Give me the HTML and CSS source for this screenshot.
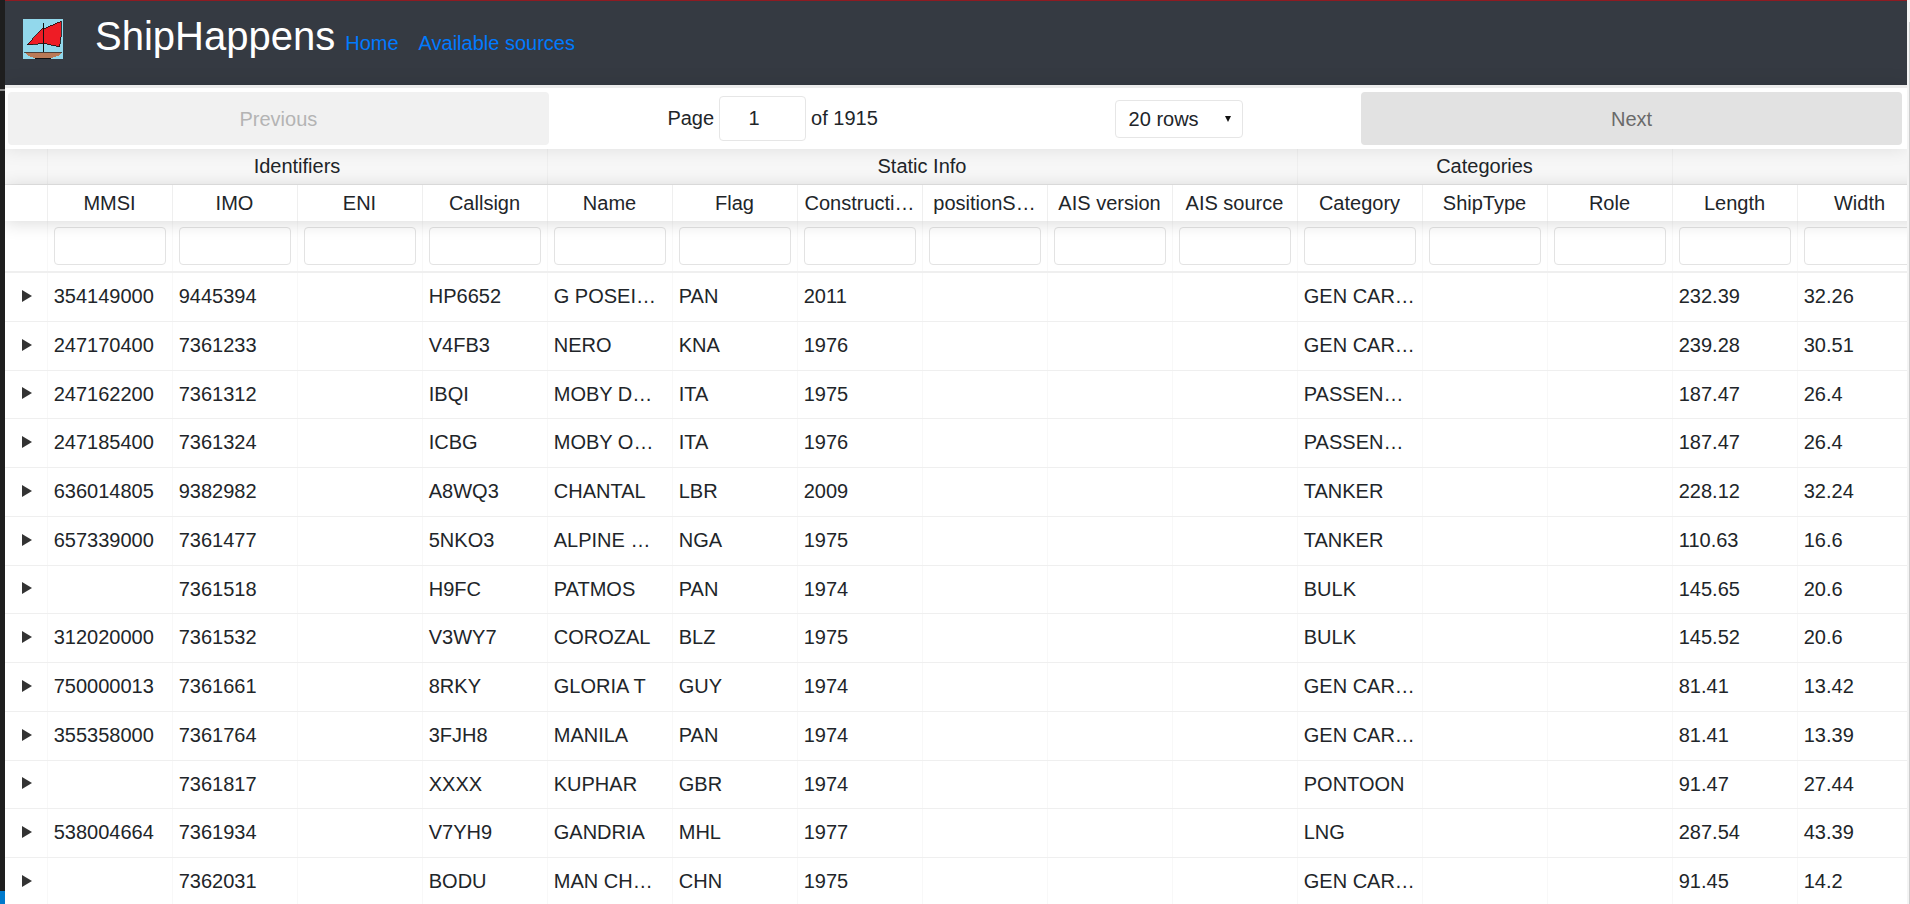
FILE: index.html
```html
<!DOCTYPE html>
<html lang="en">
<head>
    <meta charset="UTF-8">
    <meta name="viewport" content="width=device-width, initial-scale=1.0">
    <title>ShipHappens</title>
    <link rel="stylesheet" href="styles.css">
</head>
<body>
    <div class="strip-left">
        <div class="strip-tick"></div>
        <div class="strip-status"></div>
    </div>
    <div class="app">
        <nav class="navbar">
            <svg class="logo" viewBox="0 0 40 40" width="40" height="40">
                <rect width="40" height="40" fill="#92d8ec"/>
                <path d="M20.5 8 L4 26 L20.5 24.5 Z" fill="#ee1c25" stroke="#111" stroke-width="0.8"/>
                <path d="M20.5 9.5 L38 2 L38.5 14 L36.5 28 L20.5 24.5 Z" fill="#ee1c25" stroke="#111" stroke-width="0.8"/>
                <path d="M1 33 H39 L35 37 L28 39 H12 L5 37 Z" fill="#b97a57"/>
                <path d="M1 33 H39" stroke="#333" stroke-width="0.8"/>
                <path d="M12 39.5 H28" stroke="#111" stroke-width="1"/>
                <path d="M20.7 4 V33" stroke="#111" stroke-width="1"/>
            </svg>
            <span class="brand">ShipHappens</span>
            <a class="nav-link" href="#">Home</a>
            <a class="nav-link" href="#">Available sources</a>
        </nav>

        <div class="pagination">
            <button class="page-btn page-btn-disabled" type="button">Previous</button>
            <div class="page-center">
                <span class="page-info">Page <input class="page-input" type="text" value="1"> of 1915</span>
                <span class="select-wrap">
                    <select class="page-size">
                        <option>20 rows</option>
                        <option>50 rows</option>
                    </select>
                </span>
            </div>
            <button class="page-btn" type="button">Next</button>
        </div>

        <div class="table">
            <div class="row group-row">
                <div class="hcell expander"></div>
                <div class="hcell span-4">Identifiers</div>
                <div class="hcell span-6">Static Info</div>
                <div class="hcell span-3">Categories</div>
                <div class="hcell span-2"></div>
            </div>
            <div class="row header-row">
                <div class="hcell expander"></div>
                <div class="hcell">MMSI</div>
                <div class="hcell">IMO</div>
                <div class="hcell">ENI</div>
                <div class="hcell">Callsign</div>
                <div class="hcell">Name</div>
                <div class="hcell">Flag</div>
                <div class="hcell">Constructi…</div>
                <div class="hcell">positionS…</div>
                <div class="hcell">AIS version</div>
                <div class="hcell">AIS source</div>
                <div class="hcell">Category</div>
                <div class="hcell">ShipType</div>
                <div class="hcell">Role</div>
                <div class="hcell">Length</div>
                <div class="hcell">Width</div>
            </div>
            <div class="row filter-row">
                <div class="fcell expander"></div>
                <div class="fcell"><input type="text"></div>
                <div class="fcell"><input type="text"></div>
                <div class="fcell"><input type="text"></div>
                <div class="fcell"><input type="text"></div>
                <div class="fcell"><input type="text"></div>
                <div class="fcell"><input type="text"></div>
                <div class="fcell"><input type="text"></div>
                <div class="fcell"><input type="text"></div>
                <div class="fcell"><input type="text"></div>
                <div class="fcell"><input type="text"></div>
                <div class="fcell"><input type="text"></div>
                <div class="fcell"><input type="text"></div>
                <div class="fcell"><input type="text"></div>
                <div class="fcell"><input type="text"></div>
                <div class="fcell"><input type="text"></div>
            </div>

            <div class="row body-row"><div class="cell expander"><i class="arrow"></i></div><div class="cell">354149000</div><div class="cell">9445394</div><div class="cell"></div><div class="cell">HP6652</div><div class="cell">G POSEI…</div><div class="cell">PAN</div><div class="cell">2011</div><div class="cell"></div><div class="cell"></div><div class="cell"></div><div class="cell">GEN CAR…</div><div class="cell"></div><div class="cell"></div><div class="cell">232.39</div><div class="cell">32.26</div></div>
            <div class="row body-row"><div class="cell expander"><i class="arrow"></i></div><div class="cell">247170400</div><div class="cell">7361233</div><div class="cell"></div><div class="cell">V4FB3</div><div class="cell">NERO</div><div class="cell">KNA</div><div class="cell">1976</div><div class="cell"></div><div class="cell"></div><div class="cell"></div><div class="cell">GEN CAR…</div><div class="cell"></div><div class="cell"></div><div class="cell">239.28</div><div class="cell">30.51</div></div>
            <div class="row body-row"><div class="cell expander"><i class="arrow"></i></div><div class="cell">247162200</div><div class="cell">7361312</div><div class="cell"></div><div class="cell">IBQI</div><div class="cell">MOBY D…</div><div class="cell">ITA</div><div class="cell">1975</div><div class="cell"></div><div class="cell"></div><div class="cell"></div><div class="cell">PASSEN…</div><div class="cell"></div><div class="cell"></div><div class="cell">187.47</div><div class="cell">26.4</div></div>
            <div class="row body-row"><div class="cell expander"><i class="arrow"></i></div><div class="cell">247185400</div><div class="cell">7361324</div><div class="cell"></div><div class="cell">ICBG</div><div class="cell">MOBY O…</div><div class="cell">ITA</div><div class="cell">1976</div><div class="cell"></div><div class="cell"></div><div class="cell"></div><div class="cell">PASSEN…</div><div class="cell"></div><div class="cell"></div><div class="cell">187.47</div><div class="cell">26.4</div></div>
            <div class="row body-row"><div class="cell expander"><i class="arrow"></i></div><div class="cell">636014805</div><div class="cell">9382982</div><div class="cell"></div><div class="cell">A8WQ3</div><div class="cell">CHANTAL</div><div class="cell">LBR</div><div class="cell">2009</div><div class="cell"></div><div class="cell"></div><div class="cell"></div><div class="cell">TANKER</div><div class="cell"></div><div class="cell"></div><div class="cell">228.12</div><div class="cell">32.24</div></div>
            <div class="row body-row"><div class="cell expander"><i class="arrow"></i></div><div class="cell">657339000</div><div class="cell">7361477</div><div class="cell"></div><div class="cell">5NKO3</div><div class="cell">ALPINE …</div><div class="cell">NGA</div><div class="cell">1975</div><div class="cell"></div><div class="cell"></div><div class="cell"></div><div class="cell">TANKER</div><div class="cell"></div><div class="cell"></div><div class="cell">110.63</div><div class="cell">16.6</div></div>
            <div class="row body-row"><div class="cell expander"><i class="arrow"></i></div><div class="cell"></div><div class="cell">7361518</div><div class="cell"></div><div class="cell">H9FC</div><div class="cell">PATMOS</div><div class="cell">PAN</div><div class="cell">1974</div><div class="cell"></div><div class="cell"></div><div class="cell"></div><div class="cell">BULK</div><div class="cell"></div><div class="cell"></div><div class="cell">145.65</div><div class="cell">20.6</div></div>
            <div class="row body-row"><div class="cell expander"><i class="arrow"></i></div><div class="cell">312020000</div><div class="cell">7361532</div><div class="cell"></div><div class="cell">V3WY7</div><div class="cell">COROZAL</div><div class="cell">BLZ</div><div class="cell">1975</div><div class="cell"></div><div class="cell"></div><div class="cell"></div><div class="cell">BULK</div><div class="cell"></div><div class="cell"></div><div class="cell">145.52</div><div class="cell">20.6</div></div>
            <div class="row body-row"><div class="cell expander"><i class="arrow"></i></div><div class="cell">750000013</div><div class="cell">7361661</div><div class="cell"></div><div class="cell">8RKY</div><div class="cell">GLORIA T</div><div class="cell">GUY</div><div class="cell">1974</div><div class="cell"></div><div class="cell"></div><div class="cell"></div><div class="cell">GEN CAR…</div><div class="cell"></div><div class="cell"></div><div class="cell">81.41</div><div class="cell">13.42</div></div>
            <div class="row body-row"><div class="cell expander"><i class="arrow"></i></div><div class="cell">355358000</div><div class="cell">7361764</div><div class="cell"></div><div class="cell">3FJH8</div><div class="cell">MANILA</div><div class="cell">PAN</div><div class="cell">1974</div><div class="cell"></div><div class="cell"></div><div class="cell"></div><div class="cell">GEN CAR…</div><div class="cell"></div><div class="cell"></div><div class="cell">81.41</div><div class="cell">13.39</div></div>
            <div class="row body-row"><div class="cell expander"><i class="arrow"></i></div><div class="cell"></div><div class="cell">7361817</div><div class="cell"></div><div class="cell">XXXX</div><div class="cell">KUPHAR</div><div class="cell">GBR</div><div class="cell">1974</div><div class="cell"></div><div class="cell"></div><div class="cell"></div><div class="cell">PONTOON</div><div class="cell"></div><div class="cell"></div><div class="cell">91.47</div><div class="cell">27.44</div></div>
            <div class="row body-row"><div class="cell expander"><i class="arrow"></i></div><div class="cell">538004664</div><div class="cell">7361934</div><div class="cell"></div><div class="cell">V7YH9</div><div class="cell">GANDRIA</div><div class="cell">MHL</div><div class="cell">1977</div><div class="cell"></div><div class="cell"></div><div class="cell"></div><div class="cell">LNG</div><div class="cell"></div><div class="cell"></div><div class="cell">287.54</div><div class="cell">43.39</div></div>
            <div class="row body-row"><div class="cell expander"><i class="arrow"></i></div><div class="cell"></div><div class="cell">7362031</div><div class="cell"></div><div class="cell">BODU</div><div class="cell">MAN CH…</div><div class="cell">CHN</div><div class="cell">1975</div><div class="cell"></div><div class="cell"></div><div class="cell"></div><div class="cell">GEN CAR…</div><div class="cell"></div><div class="cell"></div><div class="cell">91.45</div><div class="cell">14.2</div></div>
        </div>
    </div>
    <div class="strip-right">
        <div class="strip-thumb"></div>
    </div>
</body>
</html>
```

FILE: styles.css
```css
:root {
    --text-color: #212529;
    --link-color: #007bff;
    --nav-color: #353a42;
    --line-color: #efefef;
    --cell-line: #f8f8f8;
    --col-width: 125px;
}
html, body {
    margin: 0;
    height: 100%;
}
body {
    display: flex;
    height: 904px;
    overflow: hidden;
    background: #fff;
    color: var(--text-color);
    font-family: 'Liberation Sans', Arial, sans-serif;
    font-size: 20px;
}

/* editor window edges either side of the page */
.strip-left {
    flex: none;
    width: 5px;
    display: flex;
    flex-direction: column;
    background: #1e1e1e;
}
.strip-tick {
    height: 2px;
    margin-top: 89px;
    background: #8a8a8a;
}
.strip-status {
    height: 13px;
    margin-top: auto;
    background: #007acc;
}
.strip-right {
    flex: none;
    width: 3px;
    display: flex;
    justify-content: flex-end;
    background: #f4f4f4;
}
.strip-thumb {
    width: 1px;
    margin-top: 22px;
    background: #cdcdcd;
}

.app {
    flex: 1;
    min-width: 0;
    display: flex;
    flex-direction: column;
    overflow: hidden;
}

.navbar {
    flex: none;
    height: 85px;
    box-sizing: border-box;
    padding-left: 18px;
    display: flex;
    align-items: flex-start;
    border-top: 1px solid #8e1b22;
    background: var(--nav-color);
}
.logo {
    flex: none;
    margin-top: 18px;
    margin-right: 32px;
    shape-rendering: crispEdges;
}
.brand {
    margin-top: 12px;
    margin-right: 10px;
    color: #fff;
    font-size: 40px;
    line-height: 46px;
}
.nav-link {
    margin-top: 31px;
    margin-right: 20px;
    color: var(--link-color);
    line-height: 23px;
    text-decoration: none;
}

.pagination {
    flex: none;
    position: relative;
    z-index: 3;
    height: 64px;
    box-sizing: border-box;
    padding: 4px 4.75px 4px 2.75px;
    display: flex;
    border-top: 3px solid #ececec;
    background: #fff;
    box-shadow: 0 0 18px rgba(0, 0, 0, 0.1);
}
.page-btn {
    flex: 1;
    padding: 1px 0 0;
    border: none;
    border-radius: 4px;
    background: #e2e2e2;
    color: #6a6a6a;
    font: inherit;
}
.page-btn-disabled {
    background: #f1f1f1;
    color: #b4b4b4;
}
.page-center {
    flex: 1.5;
    display: flex;
    justify-content: space-around;
    align-items: center;
}
.page-info {
    display: flex;
    align-items: center;
    gap: 5px;
}
.page-input {
    width: 87px;
    height: 45px;
    box-sizing: border-box;
    padding: 0 17px 0 0;
    border: 1px solid #e6e6e6;
    border-radius: 4px;
    color: var(--text-color);
    font: inherit;
    text-align: center;
}
.select-wrap {
    position: relative;
    display: block;
}
.select-wrap::after {
    content: "";
    position: absolute;
    top: 16px;
    right: 12px;
    border-left: 3.5px solid transparent;
    border-right: 3.5px solid transparent;
    border-top: 6px solid #111;
    pointer-events: none;
}
.page-size {
    display: block;
    width: 128px;
    height: 38px;
    padding: 0 0 0 13px;
    border: 1px solid #e6e6e6;
    border-radius: 4px;
    background: #fff;
    color: var(--text-color);
    font: inherit;
    appearance: none;
}

.table {
    flex: 1;
    min-height: 0;
    overflow: hidden;
}
.row {
    display: flex;
    width: 1920px;
}
.group-row {
    height: 36px;
    box-sizing: border-box;
    border-bottom: 1px solid #e6e6e6;
    background: #f7f7f7;
}
.header-row {
    position: relative;
    z-index: 2;
    height: 36px;
    background: #fff;
    box-shadow: 0 2px 18px rgba(0, 0, 0, 0.15);
}
.header-row .hcell {
    padding-top: 7px;
}
.filter-row {
    height: 52px;
    box-sizing: border-box;
    border-bottom: 2px solid var(--line-color);
}
.body-row {
    height: 48.75px;
    box-sizing: border-box;
    border-bottom: 1px solid var(--line-color);
}
.hcell, .fcell, .cell {
    flex: none;
    width: var(--col-width);
    box-sizing: border-box;
    padding: 6px 6.25px;
    overflow: hidden;
    border-right: 1px solid var(--line-color);
    white-space: nowrap;
    text-overflow: ellipsis;
}
.hcell {
    line-height: 23px;
    text-align: center;
}
.fcell {
    padding-right: 5.25px;
    border-right-color: var(--cell-line);
}
.fcell input {
    display: block;
    width: 100%;
    height: 38px;
    box-sizing: border-box;
    border: 1px solid #e3e3e3;
    border-radius: 4px;
    background: #fff;
}
.cell {
    padding-top: 8px;
    padding-bottom: 9.5px;
    line-height: 30px;
    border-right-color: var(--cell-line);
}
.expander {
    width: 42.5px;
    padding: 0;
}
.cell.expander {
    display: flex;
    justify-content: center;
    align-items: center;
    padding: 0 0 2px 2px;
}
.arrow {
    border-top: 6.5px solid transparent;
    border-bottom: 6.5px solid transparent;
    border-left: 10px solid #333;
}
.span-2 { width: 250px; }
.span-3 { width: 375px; }
.span-4 { width: 500px; }
.span-6 { width: 750px; }
```
